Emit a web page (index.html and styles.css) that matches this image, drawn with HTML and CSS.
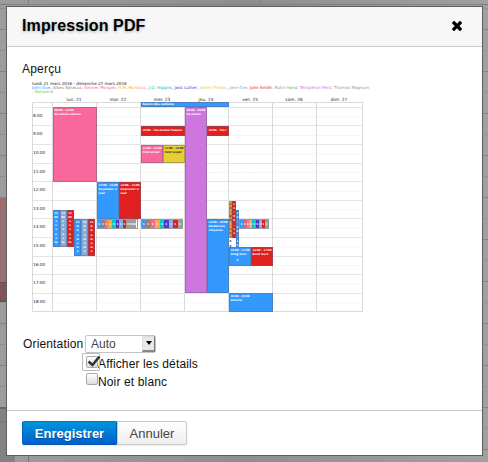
FILE: index.html
```html
<!DOCTYPE html>
<html lang="fr">
<head>
<meta charset="utf-8">
<title>Impression PDF</title>
<link rel="stylesheet" href="styles.css">
</head>
<body>
<svg class="backdrop" width="488" height="462" aria-hidden="true">
  <defs>
    <linearGradient id="shade" x1="0" y1="0" x2="1" y2="0"><stop offset="0" stop-color="#9c9c9c"/><stop offset=".5" stop-color="#8e8e8e"/><stop offset="1" stop-color="#a0a0a0"/></linearGradient>
    <pattern id="rows" width="488" height="42" y="29" patternUnits="userSpaceOnUse"><path d="M0 .5H488" stroke="#858585"/><path d="M0 21.5H488" stroke="#858585" stroke-dasharray="1 1"/></pattern>
  </defs>
  <rect width="488" height="462" fill="url(#shade)"/>
  <rect width="488" height="462" fill="url(#rows)"/>
  <path d="M0 4.5H488M28.5 0V4M260.5 0V4" stroke="#808080"/>
  <rect y="198" width="6" height="84" fill="#996e6e"/>
  <rect y="282" width="6" height="20" fill="#805555"/>
  <path d="M0 282.500H6M0 301H6" stroke="#555"/>
  <rect y="407" width="15" height="55" fill="#828282"/>
  <path d="M0 408H6" stroke="#666" stroke-width="2"/>
  <path d="M0 421.500H6M28.500 455V462" stroke="#767676"/>
</svg>

<section class="dialog">
  <header class="dialog-header">
    <h1>Impression PDF</h1>
    <svg class="close" width="10" height="10" viewBox="0 0 10 10"><path d="M2 2l6 6M8 2l-6 6" stroke="#000" stroke-width="3.300" stroke-linecap="square"/></svg>
  </header>

  <div class="dialog-body">
    <h2>Aperçu</h2>

    <div class="preview">
      <div class="period">lundi 21 mars 2016 - dimanche 27 mars 2016</div>
      <div class="people"><span class="t-blue">John Doe</span>, <span class="t-brown">Albes Baracus</span>, <span class="t-pink">Devner Morgan</span>, <span class="t-orange">H.M. Murdock</span>, <span class="t-cyan">J.Q. Higgins</span>, <span class="t-indigo">Jack Luther</span>, <span class="t-yellow">James Phelps</span>, <span class="t-sky">Jane Doe</span>, <span class="t-red">John Smith</span>, <span class="t-green">Rutin Hand</span>, <span class="t-violet">Templeton Peck</span>, <span class="t-gray">Thomas Magnum</span></div>
      <div class="people second">, <span class="t-lime">Voiture A</span></div>
      <div class="days"><span></span><span>lun. 21</span><span>mar. 22</span><span>mer. 23</span><span>jeu. 24</span><span>ven. 25</span><span>sam. 26</span><span>dim. 27</span></div>
      <div class="calendar">
        <div class="hours"><span>8:00</span><span>9:00</span><span>10:00</span><span>11:00</span><span>12:00</span><span>13:00</span><span>14:00</span><span>15:00</span><span>16:00</span><span>17:00</span><span>18:00</span></div>
        <svg class="lines" width="332" height="211" viewBox="0 0 332 211">
          <path d="M0 14.800H310M0 33.400H310M0 52H310M0 70.600H310M0 89.200H310M0 107.800H310M0 126.400H310M0 145H310M0 163.600H310M0 182.200H310M0 200.800H310" stroke="#e6e6e6" stroke-width=".8" stroke-dasharray="1 1" transform="translate(20)"/>
          <path d="M0 5.500H331M0 23.500H331M0 42.500H331M0 61.500H331M0 79.500H331M0 98.500H331M0 116.500H331M0 135.500H331M0 154.500H331M0 172.500H331M0 191.500H331" stroke="#e4e4e4"/>
          <path d="M.5 .5H330.500V209.500H.5ZM20.500 0V209M64.500 0V209M108.500 0V209M152.500 0V209M196.500 0V209M240.500 0V209M284.500 0V209" fill="none" stroke="#dadada"/>
        </svg>
        <div class="ev allday blue" style="--x:108.5;--y:0;--w:88;--h:5">Suivre des motions</div>
        <div class="ev pink" style="--x:20.5;--y:5;--w:44;--h:74.500">08:00 - 12:00<br>Re-nature externe</div>
        <div class="ev blue v" style="--x:20.500;--y:107.500;--w:7;--h:37">13<br>00<br>e<br>n<br>o<br>p<br>e<br>ta</div>
        <div class="ev sky v" style="--x:27.500;--y:107.500;--w:7;--h:37">13<br>00<br>e<br>n<br>o<br>p<br>e<br>ta</div>
        <div class="ev red v" style="--x:34.500;--y:107.500;--w:7;--h:37">13<br>00<br>e<br>n<br>o<br>p<br>e<br>ta</div>
        <div class="ev blue v" style="--x:42;--y:117;--w:7;--h:36.500">13<br>m<br>d<br>e<br>m<br>e<br>m<br>o</div>
        <div class="ev sky v" style="--x:49;--y:117;--w:7;--h:36.500">13<br>m<br>d<br>e<br>m<br>e<br>m<br>o</div>
        <div class="ev red v" style="--x:56;--y:117;--w:7;--h:36.500">13<br>m<br>d<br>e<br>m<br>e<br>m<br>o</div>
        <div class="ev blue" style="--x:64.500;--y:79.500;--w:22;--h:37.500">12:00 - 15:00<br>Emprunter U<br>suet</div>
        <div class="ev red" style="--x:86.500;--y:79.500;--w:22;--h:37.500">12:00 - 15:00<br>Emprunter U<br>suet</div>
        <div class="strip" style="--x:64.500;--y:117;--w:41;--h:9.500"><i class="blue">1</i><i class="brown">1</i><i class="pink">1</i><i class="orange">1</i><i class="cyan">1</i><i class="indigo">1</i><i class="sky">1</i><i class="red">1</i><i class="gray wide">15:00</i></div>
        <div class="ev red mid" style="--x:108.500;--y:24;--w:44;--h:9.500">10:00 - The murder frequen</div>
        <div class="ev pink" style="--x:108.500;--y:42.500;--w:22;--h:18.500">11:00 - 12:00<br>Point projet</div>
        <div class="ev yellow" style="--x:130.500;--y:42.500;--w:22;--h:18.500">11:00 - 12:00<br>Point projet</div>
        <div class="strip" style="--x:108.500;--y:117;--w:42.500;--h:9.500"><i class="blue">1</i><i class="brown">1</i><i class="pink">1</i><i class="orange">1</i><i class="cyan">1</i><i class="indigo">1</i><i class="sky">1</i><i class="red">1</i><i class="gray">1</i></div>
        <div class="ev violet" style="--x:152.500;--y:5;--w:22;--h:186">08:00 - 20:00<br>Re-nature</div>
        <div class="ev red mid" style="--x:174.500;--y:24;--w:22;--h:9.500">10:00 - The r</div>
        <div class="ev blue" style="--x:174.500;--y:117;--w:22;--h:74">14:00 - 18:00<br>Randonnee<br>citoyenne</div>
        <div class="ev blue" style="--x:196.500;--y:144.500;--w:22;--h:19">16:00 - 17:00<br>Point Tours</div>
        <div class="ev red" style="--x:218.500;--y:144.500;--w:22;--h:19">16:00 - 17:00<br>Bond Tours</div>
        <div class="ev blue" style="--x:196.500;--y:191;--w:44;--h:18.500">18:00 - 20:00<br>Historia</div>
        <div class="strip" style="--x:207;--y:117;--w:30;--h:9.500"><i class="blue">1</i><i class="brown">1</i><i class="pink">1</i><i class="orange">1</i><i class="cyan">1</i><i class="indigo">1</i><i class="sky">1</i><i class="red">1</i><i class="gray">1</i></div>
        <div class="ev orange v dark" style="--x:196.500;--y:98.500;--w:3.800;--h:37">1<br>3<br>:<br>0<br>0<br>-<br>1<br>5<br>:<br>0<br>0</div>
        <div class="ev red v" style="--x:200.300;--y:98.500;--w:3.300;--h:37">1<br>3<br>:<br>0<br>0<br>-<br>1<br>5</div>
        <div class="ev blue v tall" style="--x:203.600;--y:107.500;--w:3.400;--h:37">1<br>3<br>:<br>3<br>0<br>-<br>1<br>5<br>:<br>3<br>0</div>
      </div>
    </div>

    <form class="options">
      <label class="field"><span>Orientation</span><span class="select">Auto<b class="arrow"></b></span></label>
      <label class="check"><span class="focus"><span class="box"></span><svg width="14" height="14" viewBox="0 0 14 14"><path d="M1.500 5.500L5.500 9L12.500 .5" fill="none" stroke="#30353c" stroke-width="2.600"/></svg></span><span class="text">Afficher les détails</span></label>
      <label class="check"><span class="focus none"><span class="box"></span></span><span class="text">Noir et blanc</span></label>
    </form>
  </div>

  <footer class="dialog-footer"><button class="btn primary">Enregistrer</button><button class="btn">Annuler</button></footer>
</section>
</body>
</html>
```
FILE: styles.css
```css
* { box-sizing: border-box; }
body { margin: 0; padding: 6px 0 0 6px; width: 488px; height: 462px; overflow: hidden; font-family: "Liberation Sans", Arial, sans-serif; font-size: 12px; color: #111; }
.backdrop { position: absolute; left: 0; top: 0; z-index: -1; }
.dialog { display: flex; flex-direction: column; width: 477px; height: 450px; border: 1px solid #5e5e5e; background: #fff; }
.dialog-header { display: flex; flex: none; align-items: center; justify-content: space-between; height: 40px; padding: 0 20px 2px 15px; background: #f7f7f7; border-bottom: 1px solid #c8c8c8; }
h1 { margin: 0; padding-top: 1px; font-size: 16px; line-height: 20px; letter-spacing: .12px; color: #000; text-shadow: 0 1px 3px rgba(0,0,0,.3); }
.dialog-body { flex: 1; min-height: 0; padding: 14px 15px 0; }
h2 { margin: 0; font-size: 12px; font-weight: 400; line-height: 16px; letter-spacing: .2px; }

.preview { width: 360px; height: 235px; margin: 4px 0 0 10px; font-family: "DejaVu Sans", sans-serif; font-size: 4.500px; line-height: 5px; white-space: nowrap; }
.period { color: #222; font-size: 4.130px; }
.people { font-size: 4.070px; line-height: 4px; color: #777; }
.days { display: grid; grid-template-columns: 20px repeat(6, 44px) 46px; margin-top: 3px; height: 6px; font-size: 4.300px; text-align: center; color: #222; }
.calendar { position: relative; width: 332px; height: 211px; margin-top: -1px; }
.lines { display: block; }
.hours { position: absolute; inset: 4px auto auto 0; width: 20px; display: grid; grid-template-rows: repeat(11, 18.600px); align-items: center; padding-left: 1px; font-size: 4.200px; color: #222; }
.ev, .strip { position: absolute; left: calc(var(--x) * 1px); top: calc(var(--y) * 1px); width: calc(var(--w) * 1px); height: calc(var(--h) * 1px); }
.ev { padding: 1px 0 0 1px; border: .5px solid rgba(100,100,120,.45); color: #fff; font-size: 2.550px; font-weight: 700; line-height: 4px; }
.ev.allday { padding-top: 0; line-height: 3px; font-size: 2.900px; }
.ev.mid { line-height: 6px; }
.ev.v { padding: 1px 0 0; text-align: center; line-height: 4.200px; }
.ev.tall { line-height: 4.700px; }
.strip { display: flex; border: .5px solid #999; }
.strip i { flex: 1; min-width: 0; font-style: normal; font-weight: 700; font-size: 2.800px; line-height: 8px; text-align: center; color: #fff; }
.strip i.wide { flex: 2.800; }
.blue { background: #3399ff; }
.pink { background: #f8689c; }
.sky { background: #86aedb; }
.red { background: #e02020; }
.brown { background: #a67b6b; }
.orange { background: #fbaa42; }
.cyan { background: #00cdcb; }
.indigo { background: #5338cd; }
.gray { background: #9d9d9d; }
.violet { background: #cf75df; }
.ev.yellow { background: #e8ce32; color: #222; }
.ev.dark { color: #222; }
.t-blue { color: #3399ff; } .t-brown { color: #a08078; } .t-pink { color: #f8689c; } .t-orange { color: #fba850; }
.t-cyan { color: #00bcbc; } .t-indigo { color: #5338cd; } .t-yellow { color: #e5d050; } .t-sky { color: #86aedb; }
.t-red { color: #e02020; } .t-green { color: #70a890; } .t-violet { color: #cf75df; } .t-gray { color: #999; } .t-lime { color: #60c840; }

.options { margin: 18px 0 0 1px; }
.field { display: flex; align-items: center; height: 19px; letter-spacing: .15px; }
.field > span:first-child { width: 62px; }
.select { display: flex; align-items: center; justify-content: space-between; width: 71px; height: 18px; padding-left: 5px; border: 1px solid #c4c4c4; border-radius: 2px; color: #444; letter-spacing: 0; }
.arrow { display: grid; place-items: center; width: 13px; height: 16px; background: #e8e8e8; border: 1px solid #ddd; border-right-color: #777; border-bottom: 2px solid #888; }
.arrow::after { content: ""; border: 3.500px solid transparent; border-top: 4px solid #000; border-bottom: 0; }
.check { display: flex; height: 18px; margin-left: 59px; align-items: center; }
.focus { position: relative; width: 18px; height: 18px; padding: 2px 0 0 3px; border: 1px solid #bbb; border-radius: 1px; flex: none; }
.focus svg { position: absolute; left: 4px; top: 2px; }
.focus.none { border-color: transparent; padding-top: 1px; }
.box { display: block; width: 12px; height: 12px; border: 1px solid #aaa; border-radius: 2px; background: linear-gradient(#fff, #ddd); }
.text { white-space: nowrap; margin-left: -2px; padding-top: 4px; letter-spacing: .14px; }
.dialog-footer { display: flex; flex: none; height: 45px; padding: 10px 15px; border-top: 1px solid #c8c8c8; }
.btn { height: 24px; width: 70px; padding: 0; font: 13px "Liberation Sans", Arial, sans-serif; color: #444; background: linear-gradient(#fff, #eee); border: 1px solid #c8c8c8; border-radius: 0 2px 2px 0; box-shadow: 0 1px 2px rgba(0,0,0,.08); }
.btn.primary { width: 95px; color: #fff; font-weight: 700; background: linear-gradient(#0094dc, #0060cd); border-color: #0078c8 #0064b8 #0055b0; border-radius: 2px 0 0 2px; text-shadow: 0 1px 1px rgba(0,0,0,.3); }
```
